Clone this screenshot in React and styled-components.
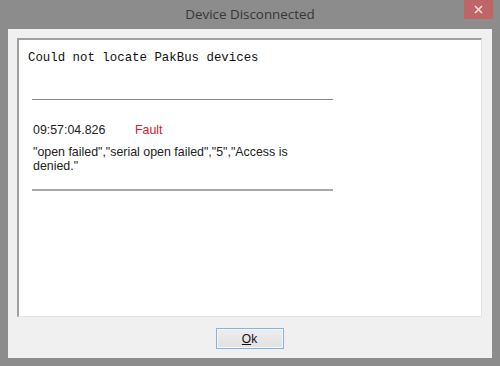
import React from "react";
import styled, { createGlobalStyle } from "styled-components";

const Global = createGlobalStyle`
  html, body {
    margin: 0;
    padding: 0;
    background: #8b8b8b;
  }
`;

const Frame = styled.div`
  width: 500px;
  height: 366px;
  background: #8c8c8c;
  display: flex;
  flex-direction: column;
  box-sizing: border-box;
  position: relative;
`;

const TitleBar = styled.div`
  height: 29px;
  display: flex;
  align-items: center;
  justify-content: center;
  font-family: "Open Sans", "Noto Sans", sans-serif;
  font-size: 13.4px;
  color: #363636;
  padding-bottom: 1px;
  box-sizing: border-box;
`;

const CloseButton = styled.div`
  position: absolute;
  top: 0;
  right: 7px;
  width: 29px;
  height: 19px;
  background: #c06565;
  display: flex;
  align-items: center;
  justify-content: center;
`;

const Client = styled.div`
  flex: 1;
  margin: 0 8px 8px;
  background: #f0f0f0;
  display: flex;
  flex-direction: column;
  padding: 9px 10px 0 9px;
  box-sizing: border-box;
`;

const Panel = styled.div`
  height: 279px;
  background: #fff;
  border-top: 2px solid #a0a0a0;
  border-left: 2px solid #a0a0a0;
  border-right: 1px solid #e3e3e3;
  border-bottom: 1px solid #e3e3e3;
  box-sizing: border-box;
  padding: 11px 0 0 9px;
`;

const Message = styled.div`
  font-family: "Liberation Mono", monospace;
  font-size: 12.4px;
  color: #111;
  line-height: 15px;
`;

const Report = styled.div`
  width: 301px;
  margin: 33px 0 0 4px;
  display: flex;
  flex-direction: column;
  font-family: "Liberation Sans", Arial, sans-serif;
  font-size: 12.4px;
  color: #222;
`;

const Rule = styled.div`
  height: ${(p) => (p.$thick ? 2 : 1)}px;
  background: ${(p) => (p.$thick ? "#a8a8a8" : "#8a8a8a")};
`;

const EventRow = styled.div`
  display: flex;
  margin: 23px 0 0 1px;
  line-height: 14px;
`;

const Time = styled.span`
  width: 102px;
`;

const Level = styled.span`
  color: #d4202a;
`;

const Detail = styled.div`
  margin: 8px 0 16px 1px;
  line-height: 14px;
  width: 296px;
`;

const Footer = styled.div`
  flex: 1;
  display: flex;
  justify-content: center;
  padding-top: 11px;
  box-sizing: border-box;
`;

const Button = styled.button`
  width: 68px;
  height: 21px;
  border: 1px solid #7eb4ea;
  background: linear-gradient(#ececec, #e2e2e2);
  box-shadow: inset 0 0 0 1px #f6f6f6;
  font-family: "Liberation Sans", Arial, sans-serif;
  font-size: 12px;
  color: #111;
  padding: 0;
  u {
    text-decoration: underline;
  }
`;

export default function App() {
  return (
    <>
      <Global />
      <Frame>
        <TitleBar>Device Disconnected</TitleBar>
        <CloseButton>
          <svg width="9" height="9" viewBox="0 0 9 9">
            <path d="M1 1L8 8M8 1L1 8" stroke="#f3dede" strokeWidth="1.6" />
          </svg>
        </CloseButton>
        <Client>
          <Panel>
            <Message>Could not locate PakBus devices</Message>
            <Report>
              <Rule />
              <EventRow>
                <Time>09:57:04.826</Time>
                <Level>Fault</Level>
              </EventRow>
              <Detail>
                "open failed","serial open failed","5","Access is denied."
              </Detail>
              <Rule $thick />
            </Report>
          </Panel>
          <Footer>
            <Button>
              <u>O</u>k
            </Button>
          </Footer>
        </Client>
      </Frame>
    </>
  );
}
